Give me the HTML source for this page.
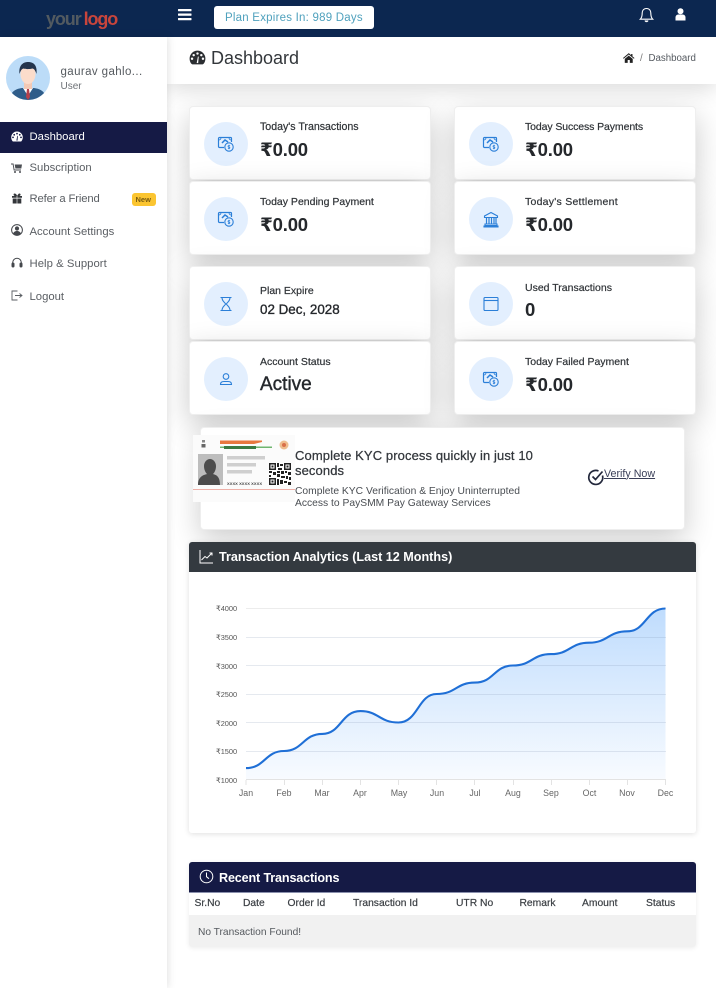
<!DOCTYPE html>
<html lang="en"><head><meta charset="utf-8"><title>Dashboard</title>
<style>
*{box-sizing:border-box}
html,body{margin:0;padding:0}
body{width:716px;height:988px;position:relative;overflow:hidden;background:#fff;font-family:"Liberation Sans","DejaVu Sans",sans-serif;color:#212529}
.t{position:absolute;white-space:nowrap;line-height:1}
.a{position:absolute}
.card{position:absolute;background:#fff;border:1px solid #efefef;border-radius:4px;box-shadow:0 10px 30px rgba(0,0,0,.21);width:242px;height:74px}
.card .c{position:absolute;left:14px;top:14.5px;width:44px;height:44px;border-radius:50%;background:#e3effe}
.card .c svg{position:absolute;left:13px;top:13px}
.card .l{position:absolute;left:70px;top:15px;font-size:10.5px;line-height:1;color:#2f3337;white-space:nowrap;font-weight:400;-webkit-text-stroke:.2px #2f3337}
.card .v{position:absolute;left:70px;top:33.5px;font-size:18.5px;letter-spacing:-.2px;line-height:1;font-weight:700;color:#25282c;white-space:nowrap}
.nav{position:absolute;left:29.5px;font-size:11.3px;line-height:1;color:#5a5e63;white-space:nowrap}
.ni{position:absolute;left:11px}
.th{position:absolute;top:899px;font-size:10.3px;line-height:1;color:#3b3f44;white-space:nowrap;-webkit-text-stroke:.2px #3b3f44}
.yl{position:absolute;left:216px;font-size:7.4px;line-height:1;color:#555;white-space:nowrap}
.xl{position:absolute;top:789px;width:40px;text-align:center;font-size:8.8px;line-height:1;color:#666;white-space:nowrap}
</style></head><body>

<!-- page header -->
<div class="a" style="left:167px;top:37px;width:549px;height:47px;background:#fff;box-shadow:0 5px 22px rgba(0,0,0,.15);z-index:2"></div>

<!-- cards -->
<div class="card" style="left:189px;top:106px"><div class="c"><svg width="18" height="18" viewBox="0 0 18 18"><use href="#money"/></svg></div><div class="l" style="font-size:10.6px">Today's Transactions</div><div class="v">₹0.00</div></div>
<div class="card" style="left:454px;top:106px"><div class="c"><svg width="18" height="18" viewBox="0 0 18 18"><use href="#money"/></svg></div><div class="l" style="letter-spacing:-.1px">Today Success Payments</div><div class="v">₹0.00</div></div>
<div class="card" style="left:189px;top:181px;height:74px"><div class="c"><svg width="18" height="18" viewBox="0 0 18 18"><use href="#money"/></svg></div><div class="l">Today Pending Payment</div><div class="v">₹0.00</div></div>
<div class="card" style="left:454px;top:181px;height:74px"><div class="c"><svg width="18" height="18" viewBox="0 0 18 18"><path d="M9 2.5 2.500 6v1.500h13V6zM3 14h12v1.500H3zM2 16h14v1H2z" fill="none" stroke="#2b7fd8" stroke-width="1.100"/><path d="M4.500 8v6M7 8v6M9.500 8v6M12 8v6M14 8v6" stroke="#2b7fd8" stroke-width="1.200"/></svg></div><div class="l" style="letter-spacing:.25px">Today's Settlement</div><div class="v">₹0.00</div></div>

<div class="card" style="left:189px;top:266px"><div class="c"><svg width="18" height="18" viewBox="0 0 18 18" fill="none" stroke="#2b7fd8" stroke-width="1.100"><path d="M3.500 2.500h11M3.500 15.500h11M5 2.500c0 4 3.200 5 3.600 6.500C8.200 10.500 5 11.500 5 15.500M13 2.500c0 4-3.200 5-3.600 6.500.4 1.500 3.600 2.500 3.600 6.500"/></svg></div><div class="l" style="top:18.500px">Plan Expire</div><div class="v" style="top:36px;font-size:13.400px;letter-spacing:0;font-weight:400;-webkit-text-stroke:.35px #25282c">02 Dec, 2028</div></div>
<div class="card" style="left:454px;top:266px"><div class="c"><svg width="18" height="18" viewBox="0 0 18 18" fill="none" stroke="#2b7fd8" stroke-width="1.100"><rect x="2" y="2.500" width="14" height="13" rx="1"/><path d="M2 5.500h14"/></svg></div><div class="l" style="top:15.500px">Used Transactions</div><div class="v" style="top:34px">0</div></div>
<div class="card" style="left:189px;top:341px"><div class="c"><svg width="18" height="18" viewBox="0 0 18 18" fill="none" stroke="#2b7fd8" stroke-width="1.100"><circle cx="9" cy="6.500" r="2.800"/><path d="M3.500 14.500c0-2 1.500-3 3.500-3h4c2 0 3.500 1 3.500 3zM3 14.500h12"/></svg></div><div class="l">Account Status</div><div class="v" style="top:33px;font-size:19px;letter-spacing:0;font-weight:400;-webkit-text-stroke:.4px #25282c">Active</div></div>
<div class="card" style="left:454px;top:341px"><div class="c"><svg width="18" height="18" viewBox="0 0 18 18"><use href="#money"/></svg></div><div class="l">Today Failed Payment</div><div class="v">₹0.00</div></div>

<!-- KYC -->
<div class="a" style="left:200px;top:426.500px;width:485px;height:103.500px;background:#fff;border:1px solid #eee;border-radius:4px;box-shadow:0 10px 30px rgba(0,0,0,.2)"></div>
<svg class="a" style="left:193px;top:435px;filter:blur(.25px)" width="102" height="67" viewBox="0 0 102 67">
<rect width="102" height="67" fill="#fbfbfb"/>
<rect x="0" y="54" width="102" height="1" fill="#eeb0a8"/>
<path d="M27 5.500h42v1.500l-8 2H27z" fill="#e8773f"/>
<path d="M27 11.500h52v1.500H27z" fill="#6fb56f"/>
<rect x="31" y="11" width="32" height="3" fill="#3c7a42"/>
<circle cx="91" cy="10" r="4.500" fill="#eebd8e"/>
<circle cx="91" cy="10" r="2" fill="#d9704a"/>
<rect x="9" y="5" width="3" height="2.500" fill="#888"/><rect x="8.500" y="9" width="4" height="3.500" fill="#666"/>
<rect x="5" y="19" width="25" height="31" fill="#bdbdbd"/>
<path d="M5 50c0-9 6-10 9-11-2-2-3-5-3-8 0-4 3-7 6-7s6 3 6 7c0 3-1 6-3 8 3 1 7 2 7 11z" fill="#4c4c4c"/>
<rect x="34" y="21" width="38" height="3.500" fill="#cfcfcf"/>
<rect x="34" y="28" width="29" height="3.500" fill="#cfcfcf"/>
<rect x="34" y="35" width="25" height="3.500" fill="#cfcfcf"/>
<text x="34" y="50" font-size="4" font-family="Liberation Sans" font-weight="700" fill="#444" textLength="35">XXXX XXXX XXXX</text>
<rect x="76" y="28" width="22" height="22" fill="#fff"/>
<g fill="#222"><path fill-rule="evenodd" d="M76 28h7v7h-7zM77.500 29.500v4h4v-4zM91 28h7v7h-7zM92.500 29.500v4h4v-4zM76 43h7v7h-7zM77.500 44.500v4h4v-4z"/><rect x="78.500" y="30.500" width="2" height="2"/><rect x="93.500" y="30.500" width="2" height="2"/><rect x="78.500" y="45.500" width="2" height="2"/><rect x="84" y="28" width="2" height="4"/><rect x="87" y="29" width="3" height="2"/><rect x="85" y="33" width="4" height="2"/><rect x="84" y="36" width="3" height="2"/><rect x="88" y="36" width="3" height="3"/><rect x="92" y="36" width="2" height="2"/><rect x="95" y="37" width="3" height="3"/><rect x="76" y="36" width="3" height="2"/><rect x="80" y="37" width="3" height="3"/><rect x="76" y="40" width="2" height="2"/><rect x="84" y="39" width="3" height="3"/><rect x="88" y="41" width="4" height="2"/><rect x="93" y="41" width="2" height="3"/><rect x="96" y="42" width="2" height="3"/><rect x="84" y="44" width="2" height="6"/><rect x="87" y="45" width="3" height="4"/><rect x="91" y="46" width="3" height="2"/><rect x="95" y="47" width="3" height="3"/></g>
</svg>
<div class="t" style="left:295px;top:447.500px;font-size:13px;line-height:15px;width:250px;white-space:normal;color:#33373c;-webkit-text-stroke:.25px #33373c;letter-spacing:.1px">Complete KYC process quickly in just 10 seconds</div>
<div class="t" style="left:295px;top:486px;font-size:10.300px;line-height:12px;color:#494d52">Complete KYC Verification &amp; Enjoy Uninterrupted<br>Access to PaySMM Pay Gateway Services</div>
<svg class="a" style="left:587px;top:468px" width="18" height="18" viewBox="0 0 18 18" fill="none" stroke="#23283c" stroke-width="1.700"><path d="M15.500 7.500A7 7 0 1 1 11.500 3"/><path d="M5.500 8.500l3 3 7-8"/></svg>
<div class="t" style="left:604px;top:468.500px;font-size:10.700px;color:#3a3f58;text-decoration:underline">Verify Now</div>

<!-- Chart card -->
<div class="a" style="left:189px;top:542px;width:507px;height:291px;background:#fff;border-radius:3px;box-shadow:0 1px 6px rgba(0,0,0,.13)"></div>
<div class="a" style="left:189px;top:542px;width:507px;height:30px;background:#343a40;border-radius:3px 3px 0 0"></div>
<svg class="a" style="left:199px;top:549px" width="15" height="15" viewBox="0 0 15 15" fill="none" stroke="#fff" stroke-width="1"><path d="M1 1v13h13"/><path d="M2.500 11 6 7.500l2 1.500 5-5M10.500 4H13v2.500"/></svg>
<div class="t" style="left:219px;top:550.500px;font-size:12.600px;font-weight:700;color:#fff">Transaction Analytics (Last 12 Months)</div>

<svg class="a" style="left:0;top:0" width="716" height="988" viewBox="0 0 716 988">
<defs>
<linearGradient id="g" x1="0" y1="608" x2="0" y2="780" gradientUnits="userSpaceOnUse"><stop offset="0" stop-color="#bfdcfd"/><stop offset="1" stop-color="#f8fbff"/></linearGradient>
<g id="money" fill="none" stroke="#2b7fd8"><path d="M7 12.500H2.500a1 1 0 0 1-1-1V3.500a1 1 0 0 1 1-1h11a1 1 0 0 1 1 1V7" stroke-width="1.200"/><path d="M1.500 5c1.500 0 2.500-1 2.500-2.500M14.500 5c-1.500 0-2.500-1-2.500-2.500" stroke-width=".8"/><path d="M5 8 8 5l3 2" stroke-width="1.500"/><circle cx="12" cy="12" r="4.200" fill="#e3effe" stroke-width="1.100"/><path d="M12 9.800v4.400M13.100 10.700h-1.700a.8.800 0 0 0 0 1.400h1.200a.8.800 0 0 1 0 1.300h-1.700" stroke-width=".7"/></g>
</defs>
<path fill="url(#g)" d="M246 768.100C265 768.100 265 751 284.100 751C303 751 303 733.900 322.300 733.900C341 733.900 341 711.100 360.400 711.100C379 711.100 379 722.500 398.500 722.500C418 722.500 418 694 436.700 694C456 694 456 682.600 474.800 682.600C494 682.600 494 665.500 512.900 665.500C532 665.500 532 654.100 551.100 654.100C570 654.100 570 642.700 589.200 642.700C608 642.700 608 631.300 627.400 631.300C646 631.300 646 608.500 665.500 608.500V779.500H246Z"/>
<g stroke="#7d92ad" stroke-opacity=".2" stroke-width="1"><path d="M246 637.500h420M246 665.500h420M246 694.500h420M246 722.500h420M246 751.500h420"/></g>
<path stroke="#ececec" stroke-width="1" d="M246 608.500h420"/>
<path fill="none" stroke="#1f6fd6" stroke-width="2.100" d="M246 768.100C265 768.100 265 751 284.100 751C303 751 303 733.900 322.300 733.900C341 733.900 341 711.100 360.400 711.100C379 711.100 379 722.500 398.500 722.500C418 722.500 418 694 436.700 694C456 694 456 682.600 474.800 682.600C494 682.600 494 665.500 512.900 665.500C532 665.500 532 654.100 551.100 654.100C570 654.100 570 642.700 589.200 642.700C608 642.700 608 631.300 627.400 631.300C646 631.300 646 608.500 665.500 608.500"/>
<g stroke="#e3e3e3" stroke-width="1"><path d="M246 779.500h420M246 780v5M284.500 780v5M322.500 780v5M360.500 780v5M398.500 780v5M436.500 780v5M474.500 780v5M513.500 780v5M551.500 780v5M589.500 780v5M627.500 780v5M665.500 780v5"/></g>
</svg>
<div class="yl" style="top:605px">₹4000</div><div class="yl" style="top:634px">₹3500</div><div class="yl" style="top:662.500px">₹3000</div><div class="yl" style="top:691px">₹2500</div><div class="yl" style="top:719.500px">₹2000</div><div class="yl" style="top:748px">₹1500</div><div class="yl" style="top:776.500px">₹1000</div>
<div class="xl" style="left:226px">Jan</div><div class="xl" style="left:264px">Feb</div><div class="xl" style="left:302px">Mar</div><div class="xl" style="left:340px">Apr</div><div class="xl" style="left:379px">May</div><div class="xl" style="left:417px">Jun</div><div class="xl" style="left:455px">Jul</div><div class="xl" style="left:493px">Aug</div><div class="xl" style="left:531px">Sep</div><div class="xl" style="left:569.500px">Oct</div><div class="xl" style="left:607px">Nov</div><div class="xl" style="left:645.500px">Dec</div>

<!-- Recent -->
<div class="a" style="left:189px;top:862px;width:507px;height:85px;background:#fff;border-radius:3px;box-shadow:0 1px 5px rgba(0,0,0,.08)"></div>
<div class="a" style="left:189px;top:862px;width:507px;height:30.500px;background:#151a45;border-radius:3px 3px 0 0;border-bottom:1px solid #8a90ad"></div>
<svg class="a" style="left:199px;top:869px" width="15" height="15" viewBox="0 0 15 15" fill="none" stroke="#fff" stroke-width="1"><circle cx="7.500" cy="7.500" r="6.300"/><path d="M7.500 3.500v4.200l2.500 2"/></svg>
<div class="t" style="left:219px;top:871.500px;font-size:12.600px;letter-spacing:-.15px;font-weight:700;color:#fff">Recent Transactions</div>
<div class="th" style="left:194.500px">Sr.No</div><div class="th" style="left:243px">Date</div><div class="th" style="left:287.500px">Order Id</div><div class="th" style="left:353px">Transaction Id</div><div class="th" style="left:456px">UTR No</div><div class="th" style="left:519.500px">Remark</div><div class="th" style="left:582px">Amount</div><div class="th" style="left:646px">Status</div>
<div class="a" style="left:189px;top:915px;width:507px;height:32px;background:#f1f1f1;border-radius:0 0 3px 3px"></div>
<div class="t" style="left:198px;top:927.500px;font-size:10.200px;color:#55595e">No Transaction Found!</div>

<!-- Top bar -->
<div class="a" style="left:0;top:0;width:716px;height:37px;background:#0c2750;z-index:3">
<div class="t" style="left:46px;top:10px;font-size:18px;font-weight:700;letter-spacing:-1.100px;color:#525a60">your<span style="color:#c8453c;margin-left:3px">logo</span></div>
<svg class="a" style="left:178px;top:9px" width="14" height="12" viewBox="0 0 14 12" fill="#fff"><rect y="0" width="13.500" height="2.300" rx=".5"/><rect y="4.500" width="13.500" height="2.300" rx=".5"/><rect y="9" width="13.500" height="2.300" rx=".5"/></svg>
<div class="a" style="left:214px;top:5.500px;width:160px;height:23px;background:#fff;border-radius:3px"></div>
<div class="t" style="left:225px;top:12.500px;font-size:11.500px;letter-spacing:.22px;color:#4fa1bd">Plan Expires In: 989 Days</div>
<svg class="a" style="left:639px;top:7px" width="15" height="16" viewBox="0 0 15 16" fill="none" stroke="#fff" stroke-width="1.100"><path d="M7.500 1.500c-2.800 0-4.300 2-4.300 4.500 0 3-.7 5-1.900 6.200h12.400C12.500 11 11.800 9 11.800 6c0-2.500-1.500-4.500-4.300-4.500z"/><path d="M6 13.500a1.600 1.600 0 0 0 3 0" fill="#fff"/></svg>
<svg class="a" style="left:675px;top:8px" width="11" height="13" viewBox="0 0 11 13" fill="#fff"><circle cx="5.500" cy="3.300" r="3"/><path d="M.5 12.500V9.500C.5 7.500 2 6.500 3.500 6.500h4c1.500 0 3 1 3 3v3z"/></svg>
</div>

<!-- Sidebar -->
<div class="a" style="left:0;top:37px;width:167px;height:951px;background:#fff;box-shadow:1px 0 8px rgba(0,0,0,.12);z-index:3">
<svg class="a" style="left:5.500px;top:19px" width="44" height="44" viewBox="0 0 44 44"><defs><clipPath id="av"><circle cx="22" cy="22" r="22"/></clipPath></defs><g clip-path="url(#av)"><rect width="44" height="44" fill="#bcdcf8"/><path d="M4 44c0-8 5-11 12-12h12c7 1 12 4 12 12z" fill="#2f5d8a"/><path d="M17 32l5 8 5-8z" fill="#fff"/><path d="M21 33h2l1 8-2 3-2-3z" fill="#b8404a"/><rect x="18" y="24" width="8" height="9" fill="#f3c9b5"/><ellipse cx="22" cy="18" rx="7.500" ry="10" fill="#fbdccb"/><path d="M13.500 18c-1-8 3-12 8.500-12s9.500 3 8.500 12c-1-3-2-5-4-5.500-3 .8-7 .8-9 0-2 .5-3 2.500-4 5.500z" fill="#23344c"/></g></svg>
<div class="t" style="left:60.500px;top:29.500px;font-size:11.500px;letter-spacing:.4px;color:#555a5f">gaurav gahlo...</div>
<div class="t" style="left:60.500px;top:45px;font-size:10px;color:#6d7176">User</div>
<div class="a" style="left:0;top:85px;width:167px;height:31px;background:#151a45"></div>
<div class="nav" style="top:95px;color:#fff;z-index:1">Dashboard</div>
<div class="nav" style="top:126px">Subscription</div>
<div class="nav" style="top:157px;letter-spacing:-.15px">Refer a Friend</div>
<div class="nav" style="top:190px">Account Settings</div>
<div class="nav" style="top:222px;letter-spacing:.05px">Help &amp; Support</div>
<div class="nav" style="top:255px">Logout</div>
<svg class="ni" style="top:94px;z-index:1" width="12" height="11" viewBox="0 0 12 11"><use href="#dash" fill="#fff"/></svg>
<svg class="ni" style="top:126px" width="12" height="10" viewBox="0 0 12 10" fill="#4c4f54"><path d="M0 .5h2.500l1 6h6.500v1H2.700l-1-6H0zM3.700 1.500H11l-.7 4H4.400z"/><circle cx="4" cy="9" r="1"/><circle cx="9" cy="9" r="1"/></svg>
<svg class="ni" style="top:156px" width="12" height="11" viewBox="0 0 12 11" fill="#33363a"><path d="M1 3h4.700v1.800H1zM6.300 3H11v1.800H6.300zM1.700 5.500h4v5h-4zM6.300 5.500h4v5h-4zM3.500 .5C5 .5 6 2 6 3 7 1.500 7.500.5 8.500.5 10 .5 10 3 8 3H4C2.500 3 2 .5 3.500.5z"/></svg>
<svg class="ni" style="top:187px" width="12" height="12" viewBox="0 0 12 12"><circle cx="6" cy="6" r="5.400" fill="#fff" stroke="#44474c"/><circle cx="6" cy="4.500" r="2.100" fill="#44474c"/><path d="M2 9.500C3 7.500 4.500 7 6 7s3 .5 4 2.500C9 11 7.500 11.500 6 11.500S3 11 2 9.500z" fill="#44474c"/></svg>
<svg class="ni" style="top:220px" width="12" height="12" viewBox="0 0 12 12" fill="none" stroke="#44474c" stroke-width="1"><path d="M1.700 7V5.500a4.300 4.300 0 0 1 8.600 0V7"/><rect x="1" y="6" width="2" height="4" rx="1" fill="#44474c"/><rect x="9" y="6" width="2" height="4" rx="1" fill="#44474c"/></svg>
<svg class="ni" style="top:253px" width="12" height="11" viewBox="0 0 12 11" fill="none" stroke="#5a5e63" stroke-width=".9"><path d="M6.500 1H1v9h5.500M4 5.500h6.500M8.500 3.500l2.500 2-2.500 2"/></svg>
<div class="a" style="left:132px;top:156px;width:24px;height:13px;background:#fbc531;border-radius:3px"></div>
<div class="t" style="left:135.500px;top:159px;font-size:7.500px;font-weight:700;color:#7a5c10">New</div>
</div>

<!-- Page title -->
<svg class="a" style="left:189px;top:50px;z-index:4" width="17" height="15" viewBox="0 0 12 11"><defs><path id="dash" fill-rule="evenodd" d="M6 .5a5.800 5.800 0 0 0-5.800 5.800c0 1.500.5 2.900 1.400 3.900.2.200.4.300.6.300h7.600c.2 0 .4-.1.600-.3.900-1 1.400-2.400 1.400-3.900A5.800 5.800 0 0 0 6 .5zM6 1.700a.9.900 0 1 1 0 1.800.9.900 0 0 1 0-1.800zM3.200 2.900a.9.900 0 1 1 0 1.800.9.900 0 0 1 0-1.800zM8.800 2.900a.9.900 0 1 1 0 1.800.9.900 0 0 1 0-1.800zM2 5.500a.9.900 0 1 1 0 1.800.9.900 0 0 1 0-1.800zM10 5.500a.9.900 0 1 1 0 1.800.9.900 0 0 1 0-1.800zM5.400 9.500 6.300 4.800l.6.100-.4 4.700z"/></defs><use href="#dash" fill="#2b2e32"/></svg>
<div class="t" style="left:211px;top:49px;font-size:18px;color:#33373b;z-index:4">Dashboard</div>
<svg class="a" style="left:623px;top:53px;z-index:4" width="11.500" height="10" viewBox="0 0 13 11" fill="#222"><path d="M6.500 0 0 5.500l.7.800L6.500 1.500l5.800 4.800.7-.8-2.300-1.900V1H9.200v1.300zM2 6.500V11h3.300V7.700h2.400V11H11V6.500L6.500 2.800z"/></svg>
<div class="t" style="left:640px;top:54px;font-size:9.800px;color:#777;z-index:4">/</div>
<div class="t" style="left:648.500px;top:54px;font-size:9.700px;color:#555a60;z-index:4">Dashboard</div>
</body></html>
